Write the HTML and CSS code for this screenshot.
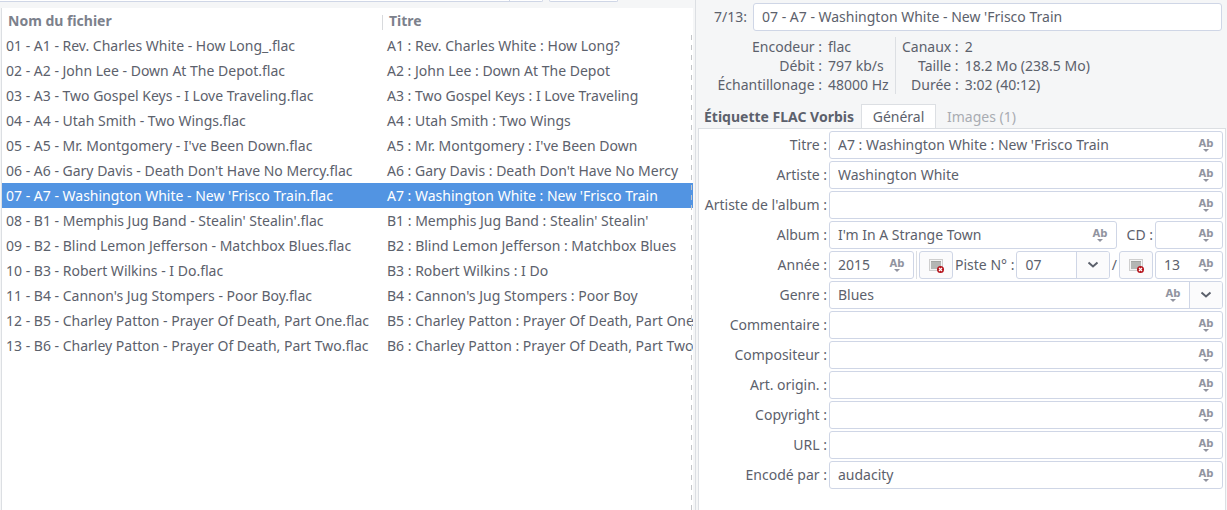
FILE: index.html
```html
<!DOCTYPE html>
<html lang="fr">
<head>
<meta charset="utf-8">
<title>Étiquettes audio</title>
<link rel="stylesheet" href="styles.css">
</head>
<body>
<svg class="defs" aria-hidden="true">
  <symbol id="ab" viewBox="0 0 16 16">
    <text class="ab-text" x="8" y="10" text-anchor="middle">Ab</text>
    <path d="M5 12h6l-3 3z" fill="#9194a0"/>
  </symbol>
  <symbol id="chevron" viewBox="0 0 16 16">
    <path d="M3.500 5.500L8 9.500l4.500-4" fill="none" stroke="#5c616c" stroke-width="2"/>
  </symbol>
  <symbol id="seq" viewBox="0 0 16 16">
    <rect x="1.500" y="2.500" width="13" height="11" fill="#f4f4f4" stroke="#cfcfcf"/>
    <rect x="3" y="4" width="10" height="8" fill="#b4b6b4"/>
    <path d="M3 4.500h10" stroke="#a2a4a2"/>
    <circle cx="12.500" cy="12.500" r="3.500" fill="#b5121b"/>
    <path d="M11 11l3 3M14 11l-3 3" stroke="#fff" stroke-width="1.200"/>
  </symbol>
</svg>
<div class="app">
  <section class="browser">
    <div class="toolbar"><span class="path"><span class="path-arrow"></span></span><span class="tool"></span></div>
    <div class="list">
      <table>
        <colgroup><col class="col-file"><col></colgroup>
        <thead><tr><th>Nom du fichier</th><th><span class="divider"></span>Titre</th></tr></thead>
        <tbody>
          <tr><td>01 - A1 - Rev. Charles White - How Long_.flac</td><td>A1 : Rev. Charles White : How Long?</td></tr>
          <tr><td>02 - A2 - John Lee - Down At The Depot.flac</td><td>A2 : John Lee : Down At The Depot</td></tr>
          <tr><td>03 - A3 - Two Gospel Keys - I Love Traveling.flac</td><td>A3 : Two Gospel Keys : I Love Traveling</td></tr>
          <tr><td>04 - A4 - Utah Smith - Two Wings.flac</td><td>A4 : Utah Smith : Two Wings</td></tr>
          <tr><td>05 - A5 - Mr. Montgomery - I've Been Down.flac</td><td>A5 : Mr. Montgomery : I've Been Down</td></tr>
          <tr><td>06 - A6 - Gary Davis - Death Don't Have No Mercy.flac</td><td>A6 : Gary Davis : Death Don't Have No Mercy</td></tr>
          <tr class="selected"><td>07 - A7 - Washington White - New 'Frisco Train.flac</td><td>A7 : Washington White : New 'Frisco Train</td></tr>
          <tr><td>08 - B1 - Memphis Jug Band - Stealin' Stealin'.flac</td><td>B1 : Memphis Jug Band : Stealin' Stealin'</td></tr>
          <tr><td>09 - B2 - Blind Lemon Jefferson - Matchbox Blues.flac</td><td>B2 : Blind Lemon Jefferson : Matchbox Blues</td></tr>
          <tr><td>10 - B3 - Robert Wilkins - I Do.flac</td><td>B3 : Robert Wilkins : I Do</td></tr>
          <tr><td>11 - B4 - Cannon's Jug Stompers - Poor Boy.flac</td><td>B4 : Cannon's Jug Stompers : Poor Boy</td></tr>
          <tr><td>12 - B5 - Charley Patton - Prayer Of Death, Part One.flac</td><td>B5 : Charley Patton : Prayer Of Death, Part One</td></tr>
          <tr><td>13 - B6 - Charley Patton - Prayer Of Death, Part Two.flac</td><td>B6 : Charley Patton : Prayer Of Death, Part Two</td></tr>
        </tbody>
      </table>
    </div>
  </section>
  <section class="editor">
    <div class="filename">
      <label for="filename">7/13:</label>
      <div class="field"><input id="filename" type="text" value="07 - A7 - Washington White - New 'Frisco Train"></div>
    </div>
    <div class="info">
      <dl class="info-left">
        <dt>Encodeur :</dt><dd>flac</dd>
        <dt>Débit :</dt><dd>797 kb/s</dd>
        <dt>Échantillonage :</dt><dd>48000 Hz</dd>
      </dl>
      <dl class="info-right">
        <dt>Canaux :</dt><dd>2</dd>
        <dt>Taille :</dt><dd>18.2 Mo (238.5 Mo)</dd>
        <dt>Durée :</dt><dd>3:02 (40:12)</dd>
      </dl>
    </div>
    <div class="tabs">
      <strong>Étiquette FLAC Vorbis</strong>
      <button class="tab active" type="button">Général</button>
      <button class="tab" type="button">Images (1)</button>
    </div>
    <form class="tag-form">
      <label for="title">Titre :</label>
      <div class="field"><input id="title" type="text" value="A7 : Washington White : New 'Frisco Train"><svg class="icon"><use href="#ab"/></svg></div>
      <label for="artist">Artiste :</label>
      <div class="field"><input id="artist" type="text" value="Washington White"><svg class="icon"><use href="#ab"/></svg></div>
      <label for="album-artist">Artiste de l'album :</label>
      <div class="field"><input id="album-artist" type="text"><svg class="icon"><use href="#ab"/></svg></div>
      <label for="album">Album :</label>
      <div class="group">
        <div class="field"><input id="album" type="text" value="I'm In A Strange Town"><svg class="icon"><use href="#ab"/></svg></div>
        <label class="cd" for="cd">CD :</label>
        <div class="field short"><input id="cd" type="text"><svg class="icon"><use href="#ab"/></svg></div>
      </div>
      <label for="year">Année :</label>
      <div class="group">
        <div class="field year"><input id="year" type="text" value="2015"><svg class="icon"><use href="#ab"/></svg></div>
        <span class="separator"></span>
        <button class="square" type="button" aria-label="Numéroter les pistes"><svg class="icon seq"><use href="#seq"/></svg></button>
        <label class="track-label" for="track">Piste N° :</label>
        <div class="field track"><input id="track" type="text" value="07"><button class="drop" type="button" aria-label="Choisir la piste"><svg class="icon"><use href="#chevron"/></svg></button></div>
        <label class="slash" for="total">/</label>
        <button class="square" type="button" aria-label="Compter les pistes"><svg class="icon seq"><use href="#seq"/></svg></button>
        <div class="field short"><input id="total" type="text" value="13"><svg class="icon"><use href="#ab"/></svg></div>
      </div>
      <label for="genre">Genre :</label>
      <div class="field"><input id="genre" type="text" value="Blues"><svg class="icon"><use href="#ab"/></svg><button class="drop" type="button" aria-label="Choisir le genre"><svg class="icon"><use href="#chevron"/></svg></button></div>
      <label for="comment">Commentaire :</label>
      <div class="field"><input id="comment" type="text"><svg class="icon"><use href="#ab"/></svg></div>
      <label for="composer">Compositeur :</label>
      <div class="field"><input id="composer" type="text"><svg class="icon"><use href="#ab"/></svg></div>
      <label for="orig-artist">Art. origin. :</label>
      <div class="field"><input id="orig-artist" type="text"><svg class="icon"><use href="#ab"/></svg></div>
      <label for="copyright">Copyright :</label>
      <div class="field"><input id="copyright" type="text"><svg class="icon"><use href="#ab"/></svg></div>
      <label for="url">URL :</label>
      <div class="field"><input id="url" type="text"><svg class="icon"><use href="#ab"/></svg></div>
      <label for="encoder">Encodé par :</label>
      <div class="field"><input id="encoder" type="text" value="audacity"><svg class="icon"><use href="#ab"/></svg></div>
    </form>
  </section>
</div>
</body>
</html>
```
FILE: styles.css
```css
* { box-sizing: border-box; }
body {
  margin: 0;
  background: #f5f6f7;
  color: #5c616c;
  font: 14px/19px "Noto Sans", sans-serif;
}
input, button { font: inherit; color: inherit; }
.defs { display: none; }
.ab-text { font: bold 10px "DejaVu Sans", sans-serif; fill: #9194a0; }

.app {
  display: grid;
  grid-template-columns: minmax(0, 696fr) minmax(0, 531fr);
  min-height: 100vh;
}

.browser {
  display: flex;
  flex-direction: column;
  padding-right: 2px;
  border-right: 1px solid #dcdfe3;
}
.toolbar { display: flex; gap: 6px; height: 8px; padding-right: 75px; }
.path, .tool {
  height: 2px;
  background: #fff;
  border: solid #cfd6e6;
  border-width: 0 1px 1px 0;
  border-radius: 0 0 3px 0;
}
.path { flex: 1; display: flex; justify-content: flex-end; }
.path-arrow { width: 33px; border-left: 1px solid #cfd6e6; }
.tool { width: 69px; border-left-width: 1px; border-radius: 0 0 3px 3px; }

.list {
  position: relative;
  flex: 1;
  margin-left: 1px;
  border-left: 1px solid #dcdfe3;
  background: #fff;
  overflow: hidden;
}
.list::after {
  content: "";
  position: absolute;
  top: 27px;
  right: 1px;
  bottom: 0;
  width: 1px;
  background: repeating-linear-gradient(#c4c6c9 0 5px, transparent 5px 10px);
}
table { width: 100%; table-layout: fixed; border-collapse: collapse; }
.col-file { width: 380px; }
th, td { height: 25px; padding: 0 4px; text-align: left; white-space: nowrap; overflow: hidden; }
td:first-child { padding-right: 0; }
td:last-child { padding: 0 0 0 5px; }
th { padding: 0 6px; color: #7c818c; }
th:last-child { padding-left: 0; }
.divider {
  display: inline-block;
  width: 1px;
  height: 15px;
  margin-right: 6px;
  vertical-align: middle;
  background: #d8dadd;
}
.selected { background: #5294e2; color: #fff; }

.editor { display: flex; flex-direction: column; padding: 3px 1px 0 2px; }
.filename { display: flex; align-items: center; gap: 6px; padding: 0 4px 0 16px; }
.field {
  flex: 1;
  min-width: 0;
  display: flex;
  align-items: center;
  height: 28px;
  background: #fff;
  border: 1px solid #cfd6e6;
  border-radius: 3px;
  overflow: hidden;
}
.field input {
  flex: 1;
  width: 0;
  min-width: 0;
  height: 20px;
  padding: 0 8px 1px;
  border: 0;
  outline: 0;
  background: none;
}
label { padding-bottom: 1px; }
.icon { flex: none; width: 16px; height: 16px; margin-right: 8px; }

.info { display: flex; padding: 6px 0 10px 0; }
dl { display: grid; column-gap: 6px; margin: 0; }
dt { text-align: right; }
dd { margin: 0; }
.info-left { grid-template-columns: 124px auto; padding-right: 6px; border-right: 1px solid #dcdfe3; }
.info-right { grid-template-columns: 57px auto; padding-left: 6px; }

.tabs { display: flex; align-items: stretch; height: 25px; margin-bottom: -1px; padding-left: 6px; }
.tabs strong { margin-right: 7px; padding-top: 3px; }
.tab { padding: 0 10px 1px; border: 1px solid transparent; border-bottom: 0; background: none; color: #a9acb2; }
.tab.active { min-width: 75px; background: #fff; border-color: #dcdfe3; color: #5c616c; }

.tag-form {
  flex: 1;
  display: grid;
  grid-template-columns: 128px minmax(0, 1fr);
  align-content: start;
  align-items: center;
  gap: 2px;
  padding: 2px;
  padding-left: 0;
  background: #fff;
  border: 1px solid #dcdfe3;
  border-bottom: 0;
}
.tag-form > label { text-align: right; white-space: nowrap; }
.group { display: flex; align-items: center; gap: 2px; }
.cd { padding-left: 8px; }
.field.short { flex: none; width: 68px; }
.field.year { flex: none; width: 85px; }
.separator { width: 1px; height: 28px; background: #dcdfe3; }
.square {
  flex: none;
  display: flex;
  align-items: center;
  justify-content: center;
  width: 34px;
  height: 28px;
  padding: 0;
  background: #fbfbfc;
  border: 1px solid #cfd6e6;
  border-radius: 3px;
}
.seq { margin: 0; }
.track-label, .slash { white-space: nowrap; }
.drop {
  flex: none;
  display: flex;
  align-items: center;
  justify-content: center;
  width: 33px;
  height: 26px;
  padding: 0;
  background: #fbfbfc;
  border: 0;
  border-left: 1px solid #cfd6e6;
}
.drop .icon { margin: 0; }
```
